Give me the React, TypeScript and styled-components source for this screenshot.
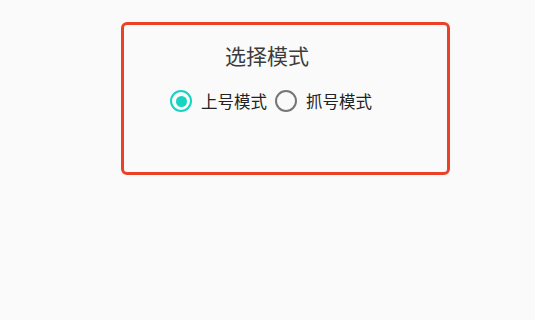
import { FC, useState } from "react";
import styled, { createGlobalStyle } from "styled-components";

const GlobalStyle = createGlobalStyle`
    html, body {
        margin: 0;
        padding: 0;
        background: #fafafa;
    }
    body {
        font-family: "Noto Sans CJK SC", "Noto Sans", sans-serif;
    }
`;

const Page = styled.div`
    padding: 22px 0 0 121px;
`;

const Dialog = styled.section`
    box-sizing: border-box;
    width: 329px;
    height: 153px;
    border: 3px solid #ec4126;
    border-radius: 6px;
    padding-top: 18px;
    display: flex;
    flex-direction: column;
`;

const Title = styled.h2`
    margin: 0 0 22px 101px;
    font-size: 21px;
    line-height: 24px;
    font-weight: 400;
    color: #3c3c3c;
`;

const RadioGroup = styled.div`
    display: flex;
    align-items: center;
    padding-left: 46px;
    gap: 8px;
`;

const Option = styled.label`
    display: flex;
    align-items: center;
    gap: 9px;
    font-size: 16.5px;
    line-height: 24px;
    color: #222;
    cursor: pointer;
`;

const Circle = styled.span<{ $checked: boolean }>`
    box-sizing: border-box;
    width: 22px;
    height: 22px;
    border-radius: 50%;
    border: 2.5px solid ${(p) => (p.$checked ? "#14d4c2" : "#767676")};
    display: flex;
    align-items: center;
    justify-content: center;

    &::after {
        content: "";
        width: 11px;
        height: 11px;
        border-radius: 50%;
        background: #14d4c2;
        display: ${(p) => (p.$checked ? "block" : "none")};
    }
`;

const modes = ["上号模式", "抓号模式"];

const App: FC = () => {
    const [mode, setMode] = useState(0);
    return (
        <>
            <GlobalStyle />
            <Page>
                <Dialog>
                    <Title>选择模式</Title>
                    <RadioGroup>
                        {modes.map((m, i) => (
                            <Option key={m} onClick={() => setMode(i)}>
                                <Circle $checked={mode === i} />
                                {m}
                            </Option>
                        ))}
                    </RadioGroup>
                </Dialog>
            </Page>
        </>
    );
};

export default App;
